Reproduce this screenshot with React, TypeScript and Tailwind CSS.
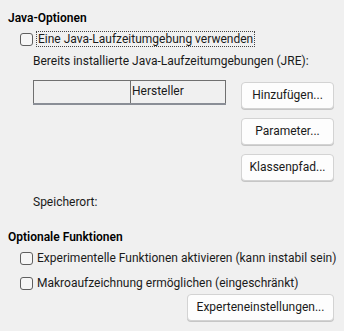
function CheckBox() {
  return <span className="block w-[13px] h-[13px] shrink-0 rounded-[3px] border border-[#5f5f5f] bg-[#f6f6f6]" />;
}

function Btn({ children, className = "" }: { children: React.ReactNode; className?: string }) {
  return (
    <button
      type="button"
      className={
        "h-[27px] rounded-[4px] border border-[#d3d3d3] bg-[#fdfdfd] text-[12px] leading-[25px] text-[#1a1a1a] shadow-[0_1px_0_#c6c6c6] " +
        className
      }
    >
      {children}
    </button>
  );
}

export default function App() {
  return (
    <div
      className="w-[344px] h-[331px] bg-[#f0f0f0] text-[#1a1a1a] text-[12px] overflow-hidden"
      style={{ fontFamily: "Roboto, 'Liberation Sans', sans-serif" }}
    >
      <div className="pl-[8px] pr-[10px] pt-[10px] flex flex-col">
        <div className="font-semibold leading-[16px] text-black">Java-Optionen</div>

        <div className="mt-[5px] ml-[12px] flex items-center h-[16px]">
          <CheckBox />
          <span className="ml-[3px] leading-[14px] px-[1px] border border-dotted border-[#444]">
            Eine Java-Laufzeitumgebung verwenden
          </span>
        </div>

        <div className="ml-[25px] flex flex-col">
          <div className="mt-[6px] leading-[16px]">Bereits installierte Java-Laufzeitumgebungen (JRE):</div>

          <div className="mt-[11px] flex items-start justify-between">
            <div className="w-[193px] flex h-[23px] border border-[#707070] border-b-0 shadow-[0_2px_0_#8a8e96]">
              <div className="w-[97px] border-r border-[#707070]" />
              <div className="flex-1 pl-[1px] leading-[21px]">Hersteller</div>
            </div>
            <div className="mt-[2px] w-[93px] flex flex-col gap-[9px]">
              <Btn>Hinzufügen...</Btn>
              <Btn>Parameter...</Btn>
              <Btn>Klassenpfad...</Btn>
            </div>
          </div>

          <div className="mt-[13px] leading-[16px]">Speicherort:</div>
        </div>

        <div className="mt-[19px] font-semibold leading-[16px] text-black">Optionale Funktionen</div>

        <div className="mt-[5px] ml-[12px] flex items-center h-[16px]">
          <CheckBox />
          <span className="ml-[4px] leading-[16px] whitespace-nowrap">
            Experimentelle Funktionen aktivieren (kann instabil sein)
          </span>
        </div>
        <div className="mt-[9px] ml-[12px] flex items-center h-[16px]">
          <CheckBox />
          <span className="ml-[4px] leading-[16px]">Makroaufzeichnung ermöglichen (eingeschränkt)</span>
        </div>

        <div className="mt-[3px] flex justify-end">
          <Btn className="w-[147px]">Experteneinstellungen...</Btn>
        </div>
      </div>
    </div>
  );
}
